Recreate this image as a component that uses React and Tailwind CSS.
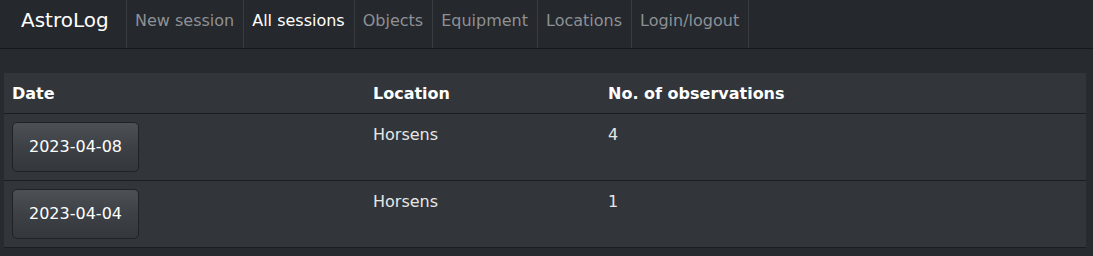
import React from "react";

const links = [
  { label: "New session", active: false },
  { label: "All sessions", active: true },
  { label: "Objects", active: false },
  { label: "Equipment", active: false },
  { label: "Locations", active: false },
  { label: "Login/logout", active: false },
];

const sessions = [
  { date: "2023-04-08", location: "Horsens", count: 4 },
  { date: "2023-04-04", location: "Horsens", count: 1 },
];

const App = () => {
  return (
    <div className="min-h-screen bg-[#272b30] font-['DejaVu_Sans',sans-serif] text-[16px] text-[#e6e6e6]">
      <nav className="flex h-[49px] bg-[#25282c] border-b border-[#16181b]">
        <div className="w-[126px] pl-[21px] pt-[8px] text-[20px] leading-[24px] text-white">
          AstroLog
        </div>
        <ul className="flex border-r border-[#383b40]">
          {links.map((link) => (
            <li
              key={link.label}
              className={`border-l border-[#383b40] px-[8px] pr-[9px] pt-[11px] leading-[20px] ${
                link.active ? "text-white" : "text-[#8d9196]"
              }`}
            >
              {link.label}
            </li>
          ))}
        </ul>
      </nav>

      <div className="pt-[24px] pl-[4px]">
        <table className="w-[1082px] bg-[#32363b] border-collapse leading-[24px]">
          <thead>
            <tr className="border-b border-[#1b1d20] text-left text-white">
              <th className="w-[361px] px-[8px] pt-[9px] pb-[7px] font-bold">Date</th>
              <th className="w-[235px] px-[8px] pt-[9px] pb-[7px] font-bold">Location</th>
              <th className="px-[8px] pt-[9px] pb-[7px] font-bold">No. of observations</th>
            </tr>
          </thead>
          <tbody>
            {sessions.map((s) => (
              <tr key={s.date} className="border-b border-[#1b1d20] align-top">
                <td className="p-[8px]">
                  <button className="h-[50px] rounded-[5px] border border-[#1f2226] bg-gradient-to-b from-[#4d5156] via-[#3d4146] to-[#34383c] px-[16px] text-[16px] leading-[24px] text-white">
                    {s.date}
                  </button>
                </td>
                <td className="px-[8px] pt-[9px]">{s.location}</td>
                <td className="px-[8px] pt-[9px]">{s.count}</td>
              </tr>
            ))}
          </tbody>
        </table>
      </div>
    </div>
  );
};

export default App;
